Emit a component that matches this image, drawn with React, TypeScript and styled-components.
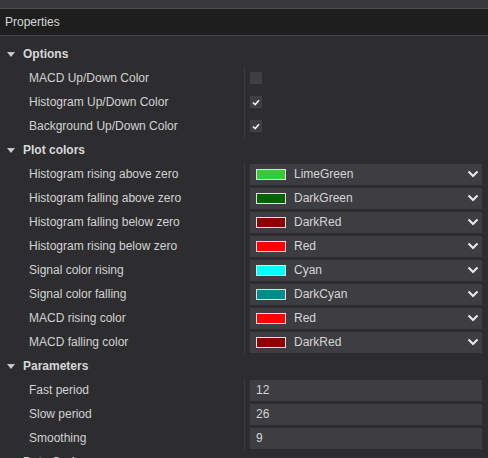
import * as React from "react";
import styled, { createGlobalStyle } from "styled-components";

const GlobalStyle = createGlobalStyle`
  html, body {
    margin: 0;
    padding: 0;
    background: #2d2d30;
  }
  body {
    font-family: "Liberation Sans", Arial, sans-serif;
    font-size: 12px;
    color: #d2d2d2;
    overflow: hidden;
  }
`;

type ColorValue = { name: string; hex: string };

type Item =
  | { kind: "check"; label: string; checked: boolean }
  | { kind: "color"; label: string; value: ColorValue }
  | { kind: "number"; label: string; value: string };

interface Section {
  title: string;
  items: Item[];
}

const sections: Section[] = [
  {
    title: "Options",
    items: [
      { kind: "check", label: "MACD Up/Down Color", checked: false },
      { kind: "check", label: "Histogram Up/Down Color", checked: true },
      { kind: "check", label: "Background Up/Down Color", checked: true },
    ],
  },
  {
    title: "Plot colors",
    items: [
      { kind: "color", label: "Histogram rising above zero", value: { name: "LimeGreen", hex: "#32cd32" } },
      { kind: "color", label: "Histogram falling above zero", value: { name: "DarkGreen", hex: "#006400" } },
      { kind: "color", label: "Histogram falling below zero", value: { name: "DarkRed", hex: "#8b0000" } },
      { kind: "color", label: "Histogram rising below zero", value: { name: "Red", hex: "#ff0000" } },
      { kind: "color", label: "Signal color rising", value: { name: "Cyan", hex: "#00ffff" } },
      { kind: "color", label: "Signal color falling", value: { name: "DarkCyan", hex: "#008b8b" } },
      { kind: "color", label: "MACD rising color", value: { name: "Red", hex: "#ff0000" } },
      { kind: "color", label: "MACD falling color", value: { name: "DarkRed", hex: "#8b0000" } },
    ],
  },
  {
    title: "Parameters",
    items: [
      { kind: "number", label: "Fast period", value: "12" },
      { kind: "number", label: "Slow period", value: "26" },
      { kind: "number", label: "Smoothing", value: "9" },
    ],
  },
  {
    title: "Data Series",
    items: [],
  },
];

const Window = styled.div`
  width: 488px;
  height: 458px;
  display: flex;
  flex-direction: column;
  background: #2d2d30;
  overflow: hidden;

  & > * {
    flex-shrink: 0;
  }
`;

const TopStrip = styled.div`
  height: 8px;
  background: #38383b;
  border-bottom: 1px solid #4c4c50;
`;

const Header = styled.div`
  height: 26px;
  display: flex;
  align-items: center;
  padding-left: 5px;
  background: #1e1e1e;
  color: #d6d6d6;
  border-bottom: 1px solid #48484c;
`;

const Body = styled.div`
  padding-top: 6px;
  display: flex;
  flex-direction: column;
`;

const SectionHead = styled.div`
  height: 24px;
  display: flex;
  align-items: center;
  gap: 8px;
  padding-left: 7px;
  font-weight: bold;
  color: #d8d8d8;
`;

const Triangle = styled.span`
  width: 0;
  height: 0;
  border-left: 4px solid transparent;
  border-right: 4px solid transparent;
  border-top: 5px solid #c8c8c8;
`;

const Grid = styled.div`
  display: grid;
  grid-template-columns: 244px 1px 1fr;
`;

const Divider = styled.div<{ $rows: number }>`
  grid-column: 2;
  grid-row: 1 / span ${(p) => p.$rows};
  background: #3c3c40;
`;

const Label = styled.div`
  grid-column: 1;
  height: 24px;
  display: flex;
  align-items: center;
  padding-left: 29px;
  color: #d2d2d2;
  white-space: nowrap;
`;

const Cell = styled.div`
  grid-column: 3;
  height: 24px;
  display: flex;
  align-items: center;
  padding: 0 6px 0 5px;
`;

const CheckBox = styled.div<{ $checked: boolean }>`
  width: 12px;
  height: 12px;
  background: #3e3e43;
  display: flex;
  align-items: center;
  justify-content: center;
`;

const Field = styled.div`
  flex: 1;
  height: 21px;
  background: #3d3d42;
  display: flex;
  align-items: center;
  padding-left: 6px;
  padding-right: 3px;
  color: #d6d6d6;
`;

const Swatch = styled.span<{ $color: string }>`
  width: 28px;
  height: 9px;
  background: ${(p) => p.$color};
  border: 1px solid #e0e0e0;
  margin-right: 8px;
`;

const FieldText = styled.span`
  flex: 1;
`;

const Chevron = () => (
  <svg width="12" height="8" viewBox="0 0 12 8">
    <path d="M1.5 1.5 L6 6 L10.5 1.5" fill="none" stroke="#e6e6e6" strokeWidth="2.2" />
  </svg>
);

const Tick = () => (
  <svg width="8" height="7" viewBox="0 0 8 7">
    <path d="M1 3.5 L3.2 5.5 L7 1.2" fill="none" stroke="#f0f0f0" strokeWidth="1.6" />
  </svg>
);

const renderValue = (item: Item) => {
  if (item.kind === "check") {
    return <CheckBox $checked={item.checked}>{item.checked && <Tick />}</CheckBox>;
  }
  if (item.kind === "color") {
    return (
      <Field>
        <Swatch $color={item.value.hex} />
        <FieldText>{item.value.name}</FieldText>
        <Chevron />
      </Field>
    );
  }
  return (
    <Field>
      <FieldText>{item.value}</FieldText>
    </Field>
  );
};

const App: React.FC = () => (
  <Window>
    <GlobalStyle />
    <TopStrip />
    <Header>Properties</Header>
    <Body>
      {sections.map((section) => (
        <div key={section.title}>
          <SectionHead>
            <Triangle />
            {section.title}
          </SectionHead>
          {section.items.length > 0 && (
            <Grid>
              <Divider $rows={section.items.length} />
              {section.items.map((item, i) => (
                <React.Fragment key={i}>
                  <Label style={{ gridRow: i + 1 }}>{item.label}</Label>
                  <Cell style={{ gridRow: i + 1 }}>{renderValue(item)}</Cell>
                </React.Fragment>
              ))}
            </Grid>
          )}
        </div>
      ))}
    </Body>
  </Window>
);

export default App;
